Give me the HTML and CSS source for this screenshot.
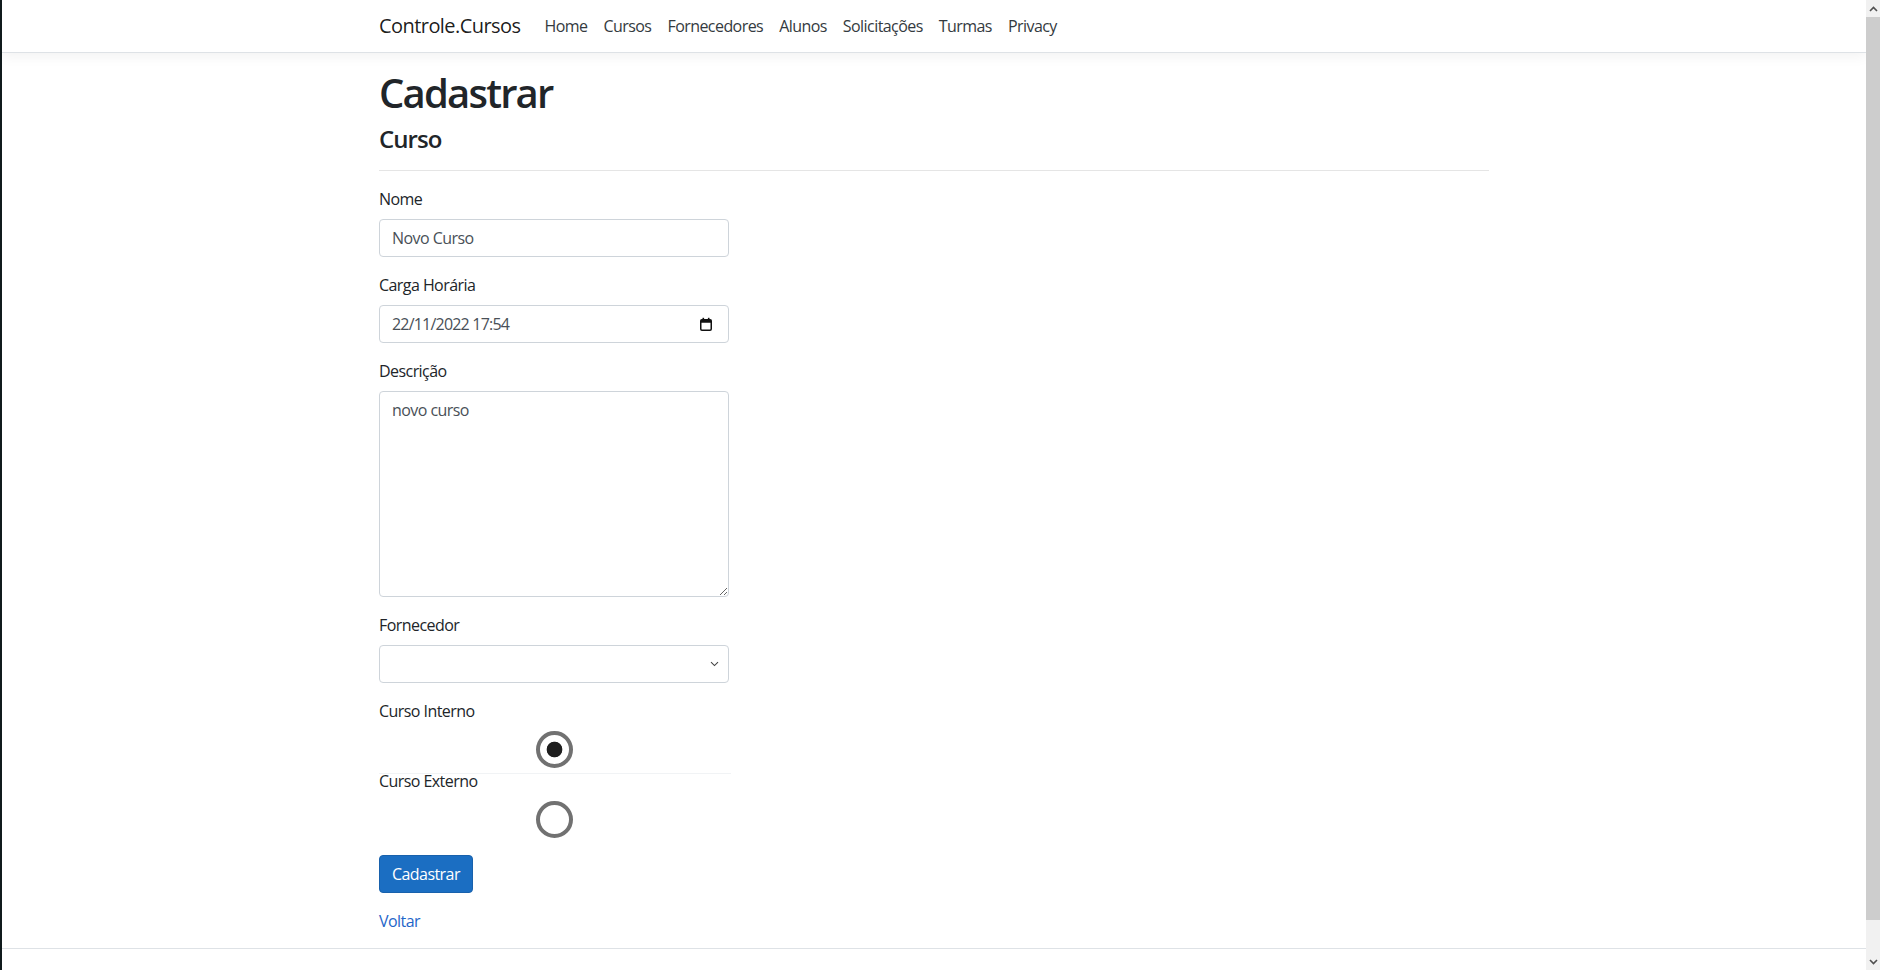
FILE: index.html
```html
<!DOCTYPE html>
<html lang="pt-br">
<head>
<meta charset="utf-8">
<title>Cadastrar - Controle.Cursos</title>
<link rel="stylesheet" href="styles.css">
</head>
<body>
<header>
  <nav class="navbar">
    <div class="container nav-inner">
      <a class="brand" href="#">Controle.Cursos</a>
      <ul class="nav">
        <li><a class="nav-link" href="#">Home</a></li>
        <li><a class="nav-link" href="#">Cursos</a></li>
        <li><a class="nav-link" href="#">Fornecedores</a></li>
        <li><a class="nav-link" href="#">Alunos</a></li>
        <li><a class="nav-link" href="#">Solicitações</a></li>
        <li><a class="nav-link" href="#">Turmas</a></li>
        <li><a class="nav-link" href="#">Privacy</a></li>
      </ul>
    </div>
  </nav>
</header>

<main class="container main">
  <h1 class="title">Cadastrar</h1>
  <h4 class="subtitle">Curso</h4>
  <hr class="divider">

  <div class="col">
    <form class="form">
      <div class="form-group">
        <label class="label" for="nome">Nome</label>
        <input class="form-control" id="nome" type="text" value="Novo Curso">
      </div>

      <div class="form-group">
        <label class="label">Carga Horária</label>
        <div class="form-control date-control">
          <span class="date-text">22/11/2022 17:54</span>
          <svg class="cal-icon" width="14" height="14" viewBox="0 0 14 14" aria-hidden="true">
            <rect x="1.75" y="2.75" width="10.5" height="10.5" rx="1.2" fill="none" stroke="#111" stroke-width="1.5"/>
            <rect x="1.75" y="2.75" width="10.5" height="3" fill="#111"/>
            <rect x="3.5" y="0.8" width="1.6" height="2.5" fill="#111"/>
            <rect x="8.9" y="0.8" width="1.6" height="2.5" fill="#111"/>
          </svg>
        </div>
      </div>

      <div class="form-group">
        <label class="label" for="descricao">Descrição</label>
        <textarea class="form-control textarea" id="descricao" rows="8">novo curso</textarea>
      </div>

      <div class="form-group">
        <label class="label" for="fornecedor">Fornecedor</label>
        <div class="select-wrap">
          <select class="form-control select" id="fornecedor">
            <option></option>
          </select>
          <svg class="chevron" width="9" height="6" viewBox="0 0 9 6" aria-hidden="true">
            <path d="M1 1.2 L4.5 4.6 L8 1.2" fill="none" stroke="#444" stroke-width="1.1"/>
          </svg>
        </div>
      </div>

      <div class="form-group">
        <label class="label" for="interno">Curso Interno</label>
        <div class="radio-wrap radio-first">
          <input class="radio" type="radio" name="tipo" id="interno" checked>
        </div>
        <label class="label" for="externo">Curso Externo</label>
        <div class="radio-wrap">
          <input class="radio" type="radio" name="tipo" id="externo">
        </div>
      </div>

      <div class="form-group">
        <button class="btn-primary" type="button">Cadastrar</button>
      </div>
    </form>

    <div class="back">
      <a class="link" href="#">Voltar</a>
    </div>
  </div>
</main>

<footer class="footer"></footer>

<div class="scrollbar" aria-hidden="true">
  <div class="sb-btn">
    <svg width="9" height="6" viewBox="0 0 9 6"><path d="M1 5 L4.5 1.5 L8 5" fill="none" stroke="#505050" stroke-width="1.6"/></svg>
  </div>
  <div class="sb-thumb"></div>
  <div class="sb-track"></div>
  <div class="sb-btn">
    <svg width="9" height="6" viewBox="0 0 9 6"><path d="M1 1 L4.5 4.5 L8 1" fill="none" stroke="#505050" stroke-width="1.6"/></svg>
  </div>
</div>
</body>
</html>
```

FILE: styles.css
```css
* {
  box-sizing: border-box;
}

html {
  overflow: hidden;
  font-size: 16px;
}

body {
  position: relative;
  margin: 0 14px 0 0;
  min-height: 1009px;
  border-left: 2px solid #101a1c;
  background: #fff;
  color: #212529;
  font-family: "Open Sans", "Noto Sans", "Liberation Sans", sans-serif;
  font-size: 16px;
  line-height: 1.5;
  letter-spacing: -0.035em;
}

a {
  text-decoration: none;
}

.container {
  width: 1140px;
  margin: 0 auto;
  padding: 0 15px;
}

/* Navbar */
.navbar {
  padding: 8px 16px;
  background: #fff;
  border-bottom: 1px solid #dee2e6;
  box-shadow: 0 4px 12px rgba(0, 0, 0, 0.05);
  margin-bottom: 16px;
}

.nav-inner {
  display: flex;
  align-items: center;
  height: 36px;
}

.brand {
  padding: 5px 0;
  margin-right: 16px;
  font-size: 20px;
  line-height: 26px;
  color: rgba(0, 0, 0, 0.9);
}

.nav {
  display: flex;
  list-style: none;
  margin: 0;
  padding: 0;
}

.nav-link {
  display: block;
  padding: 6px 8px;
  line-height: 24px;
  color: #343a40;
}

/* Headings */
.title {
  margin: 0 0 8px;
  font-size: 40px;
  font-weight: 600;
  line-height: 1.2;
  letter-spacing: -0.045em;
}

.subtitle {
  margin: 0 0 8px;
  font-size: 24px;
  font-weight: 600;
  line-height: 1.2;
  letter-spacing: -0.04em;
}

.divider {
  margin: 16px 0;
  border: 0;
  border-top: 1px solid rgba(0, 0, 0, 0.1);
}

/* Form */
.col {
  width: 350px;
}

.form-group {
  margin-bottom: 16px;
}

.label {
  display: inline-block;
  margin-bottom: 8px;
}

.form-control {
  display: block;
  width: 100%;
  height: 38px;
  padding: 6px 12px;
  font-family: inherit;
  font-size: 16px;
  line-height: 24px;
  letter-spacing: inherit;
  color: #495057;
  background: #fff;
  border: 1px solid #ced4da;
  border-radius: 4px;
  outline: none;
}

.date-control {
  display: flex;
  align-items: center;
  justify-content: space-between;
  padding-right: 15px;
}

.date-text {
  color: #495057;
  letter-spacing: -0.05em;
}

.cal-icon {
  display: block;
}

.textarea {
  height: 206px;
  resize: vertical;
  overflow: auto;
}

.select-wrap {
  position: relative;
}

.select {
  appearance: none;
  -webkit-appearance: none;
}

.chevron {
  position: absolute;
  right: 10px;
  top: 16px;
}

.radio-wrap {
  position: relative;
  height: 38px;
  display: flex;
  align-items: center;
  justify-content: center;
}

.radio-first::after {
  content: "";
  position: absolute;
  left: 0;
  right: -2px;
  top: 42px;
  height: 1px;
  background: #f1f3f5;
}

.radio {
  appearance: none;
  -webkit-appearance: none;
  width: 37px;
  height: 37px;
  margin: 0;
  border: 4px solid #717171;
  border-radius: 50%;
  background: #fff;
}

.radio:checked {
  background: radial-gradient(circle, #1e1e1e 0 7.5px, #fff 8.2px);
}

.btn-primary {
  display: inline-block;
  height: 38px;
  padding: 6px 12px;
  font-family: inherit;
  font-size: 16px;
  line-height: 24px;
  letter-spacing: inherit;
  color: #fff;
  background: #1b6ec2;
  border: 1px solid #1861ac;
  border-radius: 4px;
}

.back {
  line-height: 24px;
}

.link {
  color: #1f66c9;
}

/* Footer */
.footer {
  position: absolute;
  left: 0;
  right: 0;
  bottom: 0;
  height: 61px;
  border-top: 1px solid #dee2e6;
}

/* Scrollbar */
.scrollbar {
  position: fixed;
  top: 0;
  right: 0;
  width: 14px;
  height: 970px;
  display: flex;
  flex-direction: column;
  background: #f1f1f1;
}

.sb-btn {
  height: 17px;
  display: flex;
  align-items: center;
  justify-content: center;
  background: #f1f1f1;
}

.sb-thumb {
  height: 903px;
  background: #cdcdcd;
}

.sb-track {
  flex: 1;
  background: #f1f1f1;
}
```
